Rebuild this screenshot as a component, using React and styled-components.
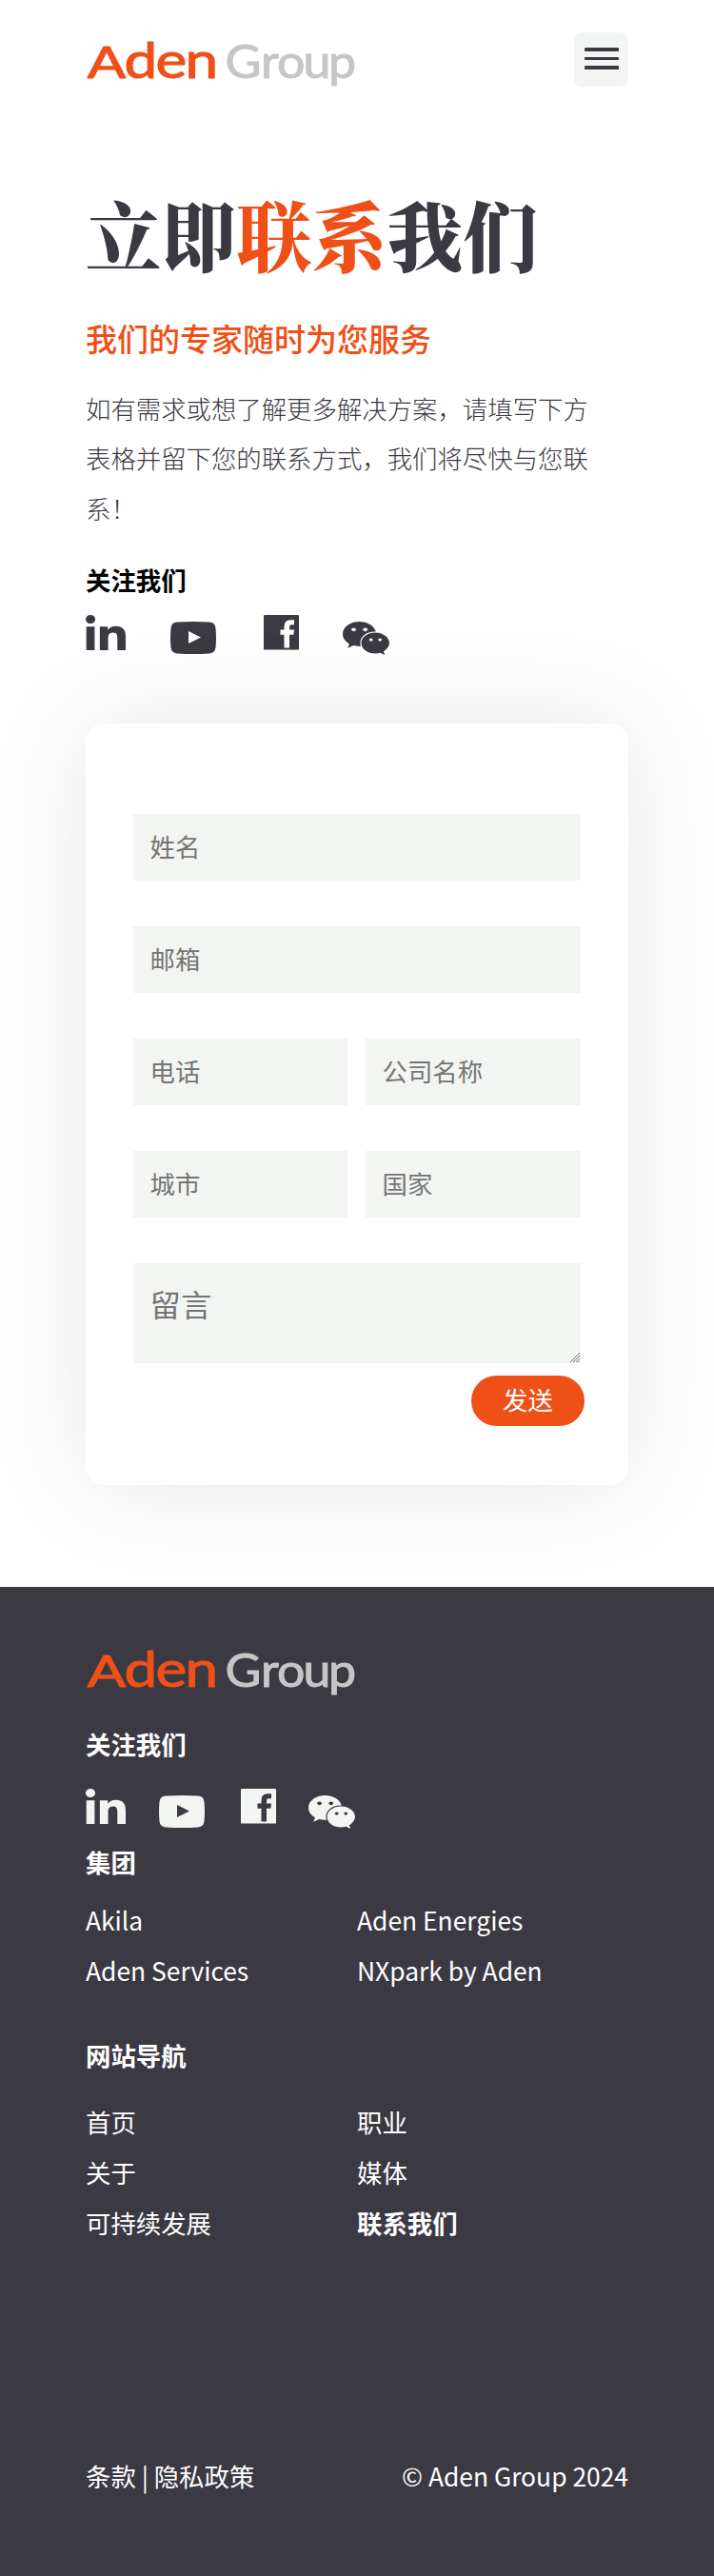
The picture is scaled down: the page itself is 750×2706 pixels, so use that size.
import React from "react";
import styled, { createGlobalStyle } from "styled-components";
import { FaLinkedinIn, FaWeixin } from "react-icons/fa";

const ORANGE = "#ee5018";
const INK = "#3b3942";
const MIST = "#f3f5f2";

const GlobalStyle = createGlobalStyle`
  * { box-sizing: border-box; }
  body {
    margin: 0;
    background: #fff;
    color: ${INK};
    font-family: "Noto Sans CJK SC", "Noto Sans", sans-serif;
    font-size: 26.4px;
    line-height: 52.8px;
  }
  h1, h2, h3, p, ul { margin: 0; padding: 0; }
  a { color: inherit; text-decoration: none; }
`;

const Page = styled.div`
  width: 750px;
  height: 2706px;
  display: flex;
  flex-direction: column;
  overflow: hidden;
`;

const Header = styled.header`
  display: flex;
  justify-content: space-between;
  align-items: flex-start;
  height: 198px;
  padding: 34px 90px 0;
`;

const LogoSvg = styled.svg`
  display: block;
  flex: none;
  width: 290px;
  height: 84px;
  margin: -12px 0;
  overflow: visible;
`;

const MenuButton = styled.button`
  display: flex;
  flex-direction: column;
  align-items: center;
  gap: 6px;
  width: 57px;
  height: 57px;
  padding: 16px 0 0;
  border: 0;
  border-radius: 8px;
  background: ${MIST};
`;

const MenuBar = styled.span`
  width: 36px;
  height: 3.7px;
  border-radius: 1px;
  background: ${INK};
`;

const Intro = styled.section`
  height: 562px;
  padding: 0 90px;
`;

const Title = styled.h1`
  font-family: "Noto Serif CJK SC", "Noto Serif SC", "Noto Sans CJK SC", serif;
  font-size: 79.2px;
  font-weight: 900;
  line-height: 95px;
  white-space: nowrap;
`;

const Accent = styled.span`
  color: ${ORANGE};
`;

const Subtitle = styled.h2`
  margin-top: 42px;
  color: ${ORANGE};
  font-size: 33px;
  font-weight: 500;
  line-height: 40px;
`;

const Lead = styled.p`
  width: 540px;
  margin-top: 27.5px;
  font-weight: 300;
`;

const Label = styled.h3`
  font-size: 26.4px;
  font-weight: 700;
  color: ${(p) => p.$color || "#fff"};
`;

const IntroLabel = styled(Label)`
  margin: 22px 0 10px;
`;

const SocialRow = styled.div`
  display: flex;
  align-items: flex-start;
  gap: ${(p) => p.$gap}px;
  height: 42px;
  color: ${(p) => p.$color};

  svg { display: block; flex: none; }
`;

const LinkedInIcon = styled(FaLinkedinIn)`
  width: 42px;
  height: 37px;
`;

const YouTubeSvg = styled.svg`
  width: 48px;
  height: 34px;
  margin: 7px 0 0 1px;
`;

const FacebookSvg = styled.svg`
  width: 37px;
  height: 37px;
  margin-left: 4px;
`;

const WeChatIcon = styled(FaWeixin)`
  width: 49px;
  height: 35px;
  margin-top: 7px;
`;

const FormCard = styled.form`
  display: flex;
  flex-direction: column;
  width: 570px;
  height: 800px;
  margin: 0 90px;
  padding: 95px 50px 0;
  border-radius: 20px;
  background: #fff;
  box-shadow: 0 0 110px rgba(0, 0, 0, 0.1);
`;

const FieldRow = styled.div`
  display: grid;
  grid-template-columns: ${(p) => (p.$split ? "225px 226px" : "470px")};
  column-gap: 19px;
  margin-bottom: 48px;
`;

const Input = styled.input`
  width: 100%;
  height: 70px;
  padding: 0 17.6px 4px;
  border: 0;
  border-radius: 0;
  background: ${MIST};
  font: 400 26.4px "Noto Sans CJK SC", sans-serif;

  &::placeholder { color: #757575; }
`;

const MessageBox = styled.div`
  position: relative;
  width: 470px;
  height: 105px;
`;

const Message = styled.textarea`
  display: block;
  width: 100%;
  height: 100%;
  padding: 18px 17.6px;
  border: 0;
  background: ${MIST};
  font: 400 32.3px / 48px "Noto Sans CJK SC", sans-serif;
  resize: none;

  &::placeholder { color: #757575; }
`;

const ResizeGrip = styled.svg`
  position: absolute;
  right: 1px;
  bottom: 1px;
  width: 10px;
  height: 10px;
`;

const SendButton = styled.button`
  align-self: flex-end;
  width: 119px;
  height: 53px;
  margin: 13px -4px 0 0;
  padding: 0 0 3px;
  border: 0;
  border-radius: 26.5px;
  background: ${ORANGE};
  color: #fff;
  font: 400 26.4px / 50px "Noto Sans CJK SC", sans-serif;
`;

const Footer = styled.footer`
  display: flex;
  flex-direction: column;
  height: 1039px;
  margin-top: 107px;
  padding: 56.5px 90px 0;
  background: ${INK};
  color: #fff;
  position: relative;
`;

const FooterFollow = styled(Label)`
  margin: 22px 0 21px;
`;

const FooterGroup = styled(Label)`
  margin-top: 9px;
`;

const FooterNavTitle = styled(Label)`
  margin: 36px 0 18px;
`;

const LinkGrid = styled.ul`
  display: grid;
  grid-template-columns: 285px 285px;
  margin-top: ${(p) => p.$top || 0}px;
  list-style: none;
`;

const LinkItem = styled.li`
  font-weight: ${(p) => (p.$current ? 700 : 400)};
`;

const Legal = styled.div`
  display: flex;
  justify-content: space-between;
  margin-top: 213px;
`;

function Logo() {
  return (
    <LogoSvg viewBox="90 22 290 84" role="img" aria-label="Aden Group">
      <g fontFamily="Lato, sans-serif" strokeLinejoin="round">
        <text transform="scale(1.17 1)" y="82" fill={ORANGE} stroke={ORANGE} strokeWidth="1.1">
          <tspan x="78.4" fontSize="46" textLength="34.6" lengthAdjust="spacingAndGlyphs">A</tspan>
          <tspan x="111.6 139.8 166.3" fontSize="53">den</tspan>
        </text>
        <text
          transform="scale(1.06 1)"
          x="223.2 258.4 274.5 300.4 325.5"
          y="82"
          fontSize="49"
          fill="#c6c6c6"
          stroke="#c6c6c6"
          strokeWidth="1"
        >
          Group
        </text>
      </g>
    </LogoSvg>
  );
}

function Socials({ color, cut, gap }) {
  return (
    <SocialRow $color={color} $gap={gap}>
      <LinkedInIcon viewBox="0 0 448 448" preserveAspectRatio="none" />
      <YouTubeSvg viewBox="0 0 48 34">
        <path
          fill="currentColor"
          d="M7 .6Q24-.6 41 .6Q47 1 47.5 7Q48.5 17 47.5 27Q47 33 41 33.4Q24 34.6 7 33.4Q1 33 .5 27Q-.5 17 .5 7Q1 1 7 .6Z"
        />
        <path fill={cut} d="M19 10L32 16.5L19 23Z" />
      </YouTubeSvg>
      <FacebookSvg viewBox="0 0 37 37">
        <rect width="37" height="36.6" rx="1.2" fill="currentColor" />
        <path
          fill={cut}
          d="M21.5 34.5V20.8H17.5V15.6H21.5V12.4Q21.5 5.2 28 5.2H32V10.2H29.3Q27 10.2 27 12.5V15.6H32L31.4 20.8H27V34.5Z"
        />
      </FacebookSvg>
      <WeChatIcon viewBox="13 32 550 448" preserveAspectRatio="none" />
    </SocialRow>
  );
}

const FIELD_ROWS = [["姓名"], ["邮箱"], ["电话", "公司名称"], ["城市", "国家"]];
const GROUP_LINKS = ["Akila", "Aden Energies", "Aden Services", "NXpark by Aden"];
const NAV_LINKS = ["首页", "职业", "关于", "媒体", "可持续发展", "联系我们"];

export default function App() {
  return (
    <Page lang="zh-CN">
      <GlobalStyle />
      <Header>
        <Logo />
        <MenuButton type="button" aria-label="菜单">
          <MenuBar />
          <MenuBar />
          <MenuBar />
        </MenuButton>
      </Header>

      <Intro>
        <Title>
          立即<Accent>联系</Accent>我们
        </Title>
        <Subtitle>我们的专家随时为您服务</Subtitle>
        <Lead>如有需求或想了解更多解决方案，请填写下方表格并留下您的联系方式，我们将尽快与您联系！</Lead>
        <IntroLabel $color="#000">关注我们</IntroLabel>
        <Socials color={INK} cut="#fff" gap={46} />
      </Intro>

      <FormCard>
        {FIELD_ROWS.map((fields) => (
          <FieldRow key={fields[0]} $split={fields.length > 1}>
            {fields.map((name) => (
              <Input key={name} placeholder={name} />
            ))}
          </FieldRow>
        ))}
        <MessageBox>
          <Message placeholder="留言" />
          <ResizeGrip viewBox="0 0 10 10">
            <path d="M0 10L10 0M3 10L10 3M6 10L10 6M8.5 10L10 8.5" stroke="#6f706f" strokeWidth="1" />
          </ResizeGrip>
        </MessageBox>
        <SendButton type="button">发送</SendButton>
      </FormCard>

      <Footer>
        <Logo />
        <FooterFollow>关注我们</FooterFollow>
        <Socials color={MIST} cut={INK} gap={34} />
        <FooterGroup>集团</FooterGroup>
        <LinkGrid $top={8}>
          {GROUP_LINKS.map((name) => (
            <LinkItem key={name}>
              <a href="#">{name}</a>
            </LinkItem>
          ))}
        </LinkGrid>
        <FooterNavTitle>网站导航</FooterNavTitle>
        <LinkGrid>
          {NAV_LINKS.map((name) => (
            <LinkItem key={name} $current={name === "联系我们"}>
              <a href="#">{name}</a>
            </LinkItem>
          ))}
        </LinkGrid>
        <Legal>
          <span>条款 | 隐私政策</span>
          <span>© Aden Group 2024</span>
        </Legal>
      </Footer>
    </Page>
  );
}
